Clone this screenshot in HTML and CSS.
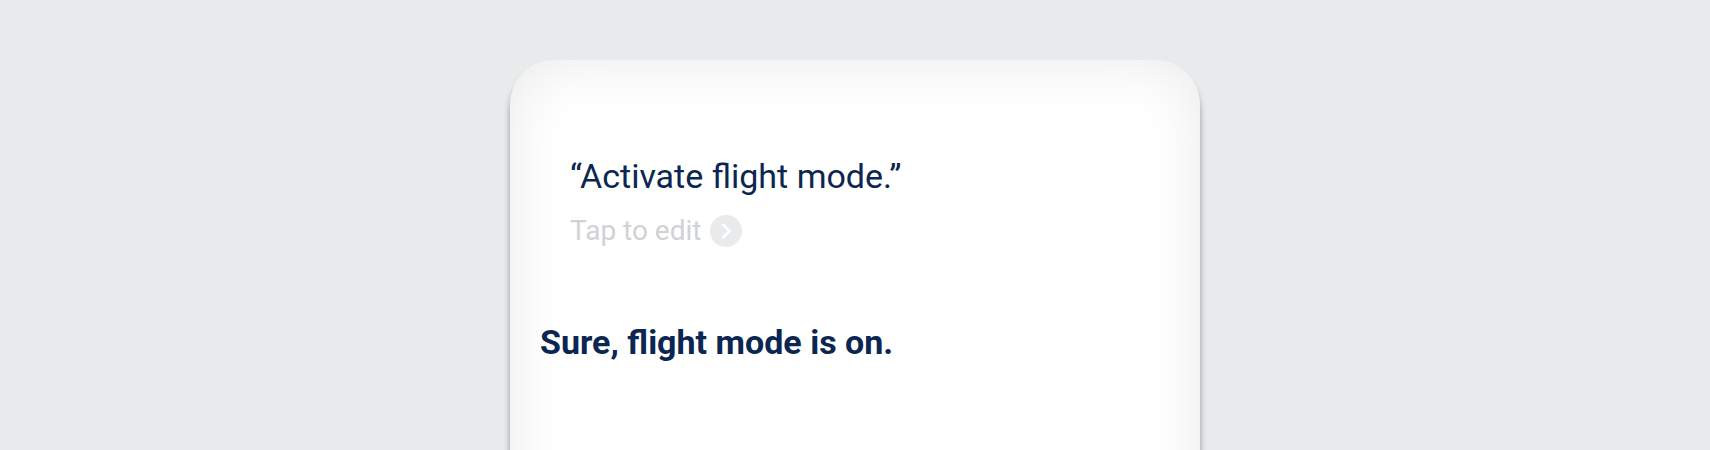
FILE: index.html
```
<!DOCTYPE html>
<html lang="en">
<head>
<meta charset="utf-8">
<title>Assistant</title>
<link rel="stylesheet" href="styles.css">
</head>
<body>
<main class="stage">
<section class="phone">
<div class="query">
<p class="utterance">“Activate flight mode.”</p>
<div class="edit"><span class="edit-label">Tap to edit</span><svg class="chevron" viewBox="0 0 32 32"><circle cx="16" cy="16" r="16" fill="#e8eaeb"/><path d="M12.6 9 19.4 16 12.6 23" fill="none" stroke="#fff" stroke-width="2.8"/></svg></div>
</div>
<p class="answer">Sure, flight mode is on.</p>
</section>
</main>
</body>
</html>
```
FILE: styles.css
```
* { box-sizing: border-box; }
body { margin: 0; background: #e8eaeb; font-family: Roboto, sans-serif; overflow: hidden; }
.stage { height: 450px; padding-top: 60px; display: flex; justify-content: center; overflow: hidden; }
.phone { width: 690px; height: 600px; flex: none; padding: 96px 30px 0; background: #fff; border-radius: 44px; color: #0b2751; box-shadow: 0 8px 6px rgba(0,0,0,.35), inset 0 0 60px rgba(0,0,0,.09); }
.query { padding-left: 30px; }
p { margin: 0; }
.utterance { font-size: 34px; line-height: 40px; }
.edit { display: flex; align-items: center; gap: 9px; margin-top: 18px; height: 34px; font-size: 28px; color: #d0d2d5; }
.edit-label { padding-bottom: 2px; }
.chevron { width: 32px; height: 32px; }
.answer { margin-top: 74px; font-size: 34px; line-height: 40px; font-weight: 700; }
```
